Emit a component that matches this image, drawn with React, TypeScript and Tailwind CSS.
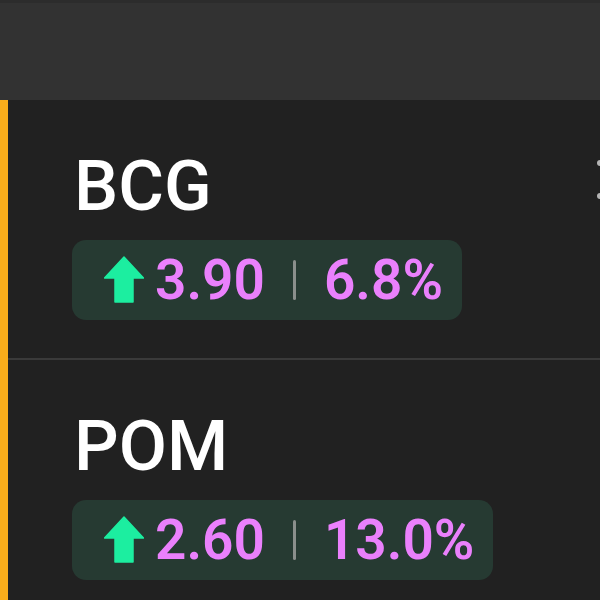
import React from "react";

function Arrow() {
  return (
    <svg width="40" height="48" viewBox="0 0 40 48" className="shrink-0">
      <path d="M20 1 L39.5 22 L29 22 L29 46 L11 46 L11 22 L0.5 22 Z" fill="#1ceea0" stroke="#1ceea0" strokeWidth="1.5" strokeLinejoin="round" />
    </svg>
  );
}

function Row({ ticker, change, pct, last, dots }: { ticker: string; change: string; pct: string; last?: boolean; dots?: boolean }) {
  return (
    <div className={`flex justify-between pl-[64px] pt-[51px] ${last ? "" : "pb-[38px] border-b-2 border-[#3a3a3a]"}`}>
      <div className="flex flex-col items-start">
        <div className="pl-[2px] text-[70px] leading-none font-medium text-white">{ticker}</div>
        <div className="mt-[19px] h-[80px] flex items-center rounded-[14px] bg-[#263a32] pl-[32px] pr-[19px]">
          <Arrow />
          <span className="ml-[11px] text-[55px] leading-none font-semibold text-[#ea80fc]">{change}</span>
          <span className="ml-[28px] mr-[28px] w-[3px] h-[40px] bg-[#8a8f8c] rounded-full" />
          <span className="text-[55px] leading-none font-semibold text-[#ea80fc]">{pct}</span>
        </div>
      </div>
      {dots ? (
        <div className="mt-[9px] mr-[-3px] flex flex-col gap-[27px]">
          <span className="w-[6px] h-[6px] rounded-full bg-[#b5b5b5]" />
          <span className="w-[6px] h-[6px] rounded-full bg-[#b5b5b5]" />
        </div>
      ) : null}
    </div>
  );
}

export default function App() {
  return (
    <div className="w-[600px] h-[600px] overflow-hidden bg-[#212121] flex flex-col" style={{ fontFamily: "Roboto, 'Noto Sans', sans-serif" }}>
      <div className="h-[100px] shrink-0 bg-[#323232] border-t-[3px] border-[#2c2c2c]" />
      <div className="flex-1 border-l-[8px] border-[#f9ad1b]">
        <Row ticker="BCG" change="3.90" pct="6.8%" dots />
        <Row ticker="POM" change="2.60" pct="13.0%" last />
      </div>
    </div>
  );
}
